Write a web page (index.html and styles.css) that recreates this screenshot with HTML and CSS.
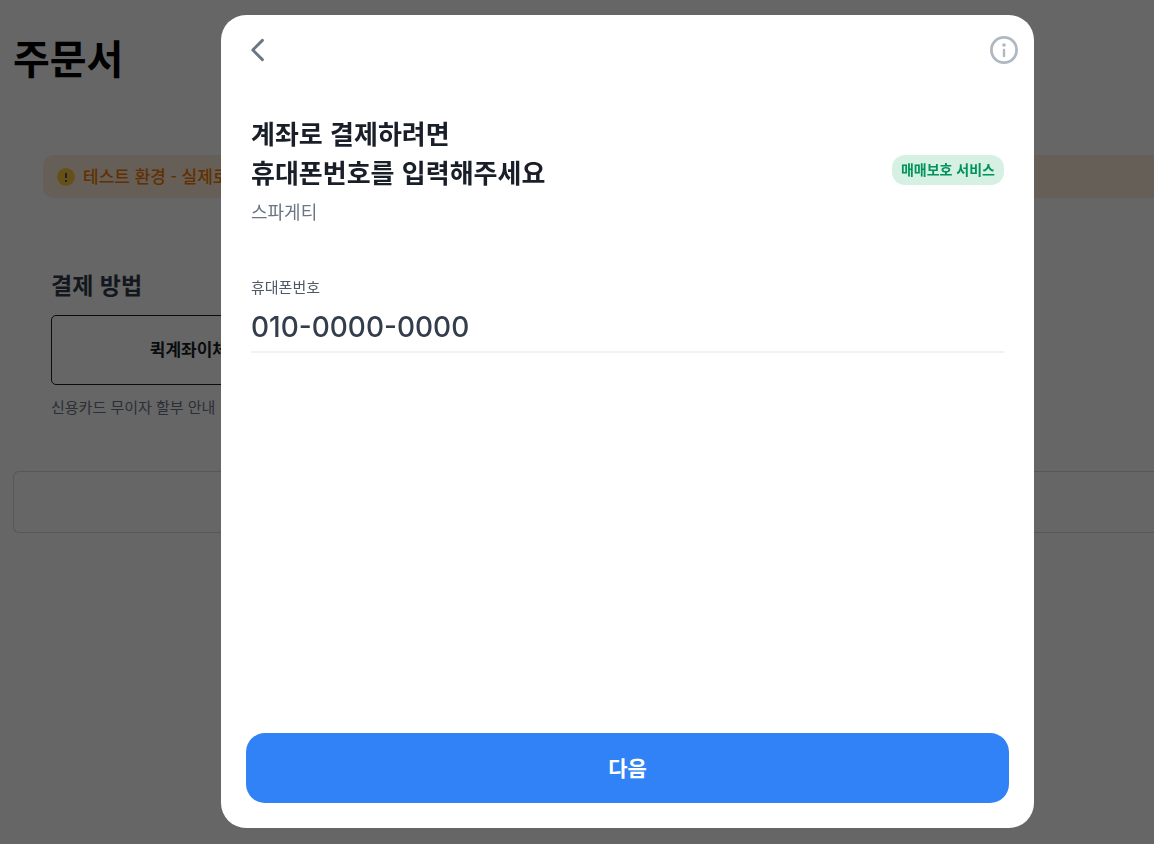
FILE: index.html
```html
<!DOCTYPE html>
<html lang="ko">
<head>
    <meta charset="UTF-8">
    <meta name="viewport" content="width=device-width, initial-scale=1.0">
    <title>주문서</title>
    <link rel="stylesheet" href="styles.css">
</head>
<body>
    <main class="order">
        <h1>주문서</h1>

        <div class="notice">
            <svg class="notice-icon" width="18" height="18" viewBox="0 0 18 18" aria-hidden="true">
                <circle cx="9" cy="9" r="9" fill="#ffc842"/>
                <path d="M8 5h2v5H8zM8 12h2v2H8z" fill="#4e5968"/>
            </svg>
            <span>테스트 환경 - 실제로</span>
        </div>

        <section class="methods">
            <h2>결제 방법</h2>
            <div class="method-list">
                <button type="button" class="method">퀵계좌이체</button>
            </div>
            <a href="#" class="card-guide">신용카드 무이자 할부 안내</a>
        </section>

        <button type="button" class="pay" aria-label="결제하기"></button>
    </main>

    <div class="overlay">
        <div class="modal" role="dialog" aria-modal="true" aria-labelledby="modal-title">
            <header class="modal-header">
                <button type="button" class="icon-button" aria-label="뒤로">
                    <svg width="14" height="24" viewBox="0 0 14 24" fill="none">
                        <path d="M11.4 2.4L1.8 12L11.4 21.6" stroke="#6b7684" stroke-width="2.9" stroke-linecap="round" stroke-linejoin="round"/>
                    </svg>
                </button>
                <button type="button" class="icon-button" aria-label="안내">
                    <svg width="28" height="28" viewBox="0 0 28 28" fill="none">
                        <circle cx="14" cy="14" r="12.6" stroke="#b0b8c1" stroke-width="2.8"/>
                        <circle cx="14" cy="9" r="1.8" fill="#b0b8c1"/>
                        <path d="M14 14v6" stroke="#b0b8c1" stroke-width="2.4" stroke-linecap="round"/>
                    </svg>
                </button>
            </header>

            <form class="modal-form">
                <div class="intro">
                    <h2 id="modal-title" class="title">계좌로 결제하려면<br>휴대폰번호를 입력해주세요</h2>
                    <span class="badge">매매보호 서비스</span>
                </div>
                <p class="product">스파게티</p>

                <div class="field">
                    <label for="phone">휴대폰번호</label>
                    <input type="tel" id="phone" value="010-0000-0000">
                </div>

                <button type="submit" class="next">다음</button>
            </form>
        </div>
    </div>
</body>
</html>
```

FILE: styles.css
```css
* {
    box-sizing: border-box;
}

body {
    margin: 0;
    min-height: 100vh;
    overflow-x: hidden;
    background: #fff;
    color: #191f28;
    font-family: "Noto Sans CJK KR", sans-serif;
}

button,
input {
    font-family: inherit;
    color: inherit;
}

h1,
h2,
p {
    margin: 0;
}

/* Order page */
.order {
    padding: 28px 0 0 13px;
}

.order h1 {
    color: #000;
    font-size: 40px;
    font-weight: 700;
    line-height: 58px;
}

.notice {
    display: flex;
    align-items: center;
    gap: 8px;
    height: 43px;
    margin: 69px 0 0 30px;
    padding: 0 14px;
    border-radius: 10px 0 0 10px;
    background: #fdeeda;
    color: #f57800;
    font-size: 17px;
    font-weight: 500;
}

.notice span {
    padding-bottom: 3px;
}

.methods {
    margin-left: 38px;
    padding-top: 68px;
}

.methods h2 {
    color: #333d4b;
    font-size: 23px;
    font-weight: 700;
    line-height: 36px;
}

.method-list {
    display: grid;
    grid-template-columns: repeat(4, 1fr);
    margin-top: 13px;
}

.method {
    height: 70px;
    padding: 0 0 3px;
    border: 1px solid #191f28;
    border-radius: 5px;
    background: #fff;
    font-size: 17px;
    font-weight: 700;
}

.card-guide {
    display: block;
    margin-top: 11px;
    color: #6b7684;
    font-size: 15px;
    line-height: 22px;
    text-decoration: none;
}

.pay {
    width: 100%;
    height: 62px;
    margin-top: 53px;
    border: 1px solid #d9d9d9;
    border-right: 0;
    border-radius: 6px 0 0 6px;
    background: #fff;
}

/* Payment dialog */
.overlay {
    position: fixed;
    inset: 0;
    display: flex;
    padding: 15px 120px 16px 221px;
    background: rgba(0, 0, 0, 0.6);
}

.modal {
    display: flex;
    flex: 1;
    flex-direction: column;
    border-radius: 25px;
    background: #fff;
}

.modal-header {
    display: flex;
    align-items: center;
    justify-content: space-between;
    padding: 21px 16px 0 30px;
}

.icon-button {
    display: flex;
    padding: 0;
    border: 0;
    background: none;
    cursor: pointer;
}

.modal-form {
    display: flex;
    flex: 1;
    flex-direction: column;
    padding: 49px 25px 25px;
}

.intro {
    display: flex;
    align-items: flex-end;
    justify-content: space-between;
    padding: 0 5px;
}

.title {
    font-size: 26px;
    font-weight: 700;
    line-height: 39px;
}

.badge {
    margin-bottom: 6px;
    padding: 0 9px 2px;
    border-radius: 13px;
    background: #d6f0e4;
    color: #029359;
    font-size: 14px;
    font-weight: 700;
    line-height: 28px;
}

.product {
    margin-top: 7px;
    padding: 0 5px;
    color: #6b7684;
    font-size: 18px;
    line-height: 26px;
}

.field {
    display: flex;
    flex-direction: column;
    margin: 52px 5px 0;
}

.field label {
    color: #4e5968;
    font-size: 15px;
    line-height: 22px;
}

.field input {
    width: 100%;
    height: 55px;
    padding: 4px 0 0;
    border: 0;
    border-bottom: 2px solid #f2f2f3;
    outline: none;
    background: none;
    color: #333d4b;
    font-family: Inter, "Noto Sans CJK KR", sans-serif;
    font-size: 28px;
    font-weight: 500;
}

.next {
    height: 70px;
    margin-top: auto;
    padding: 0 0 3px;
    border: 0;
    border-radius: 19px;
    background: #3182f6;
    color: #fff;
    font-size: 21px;
    font-weight: 700;
    cursor: pointer;
}
```
